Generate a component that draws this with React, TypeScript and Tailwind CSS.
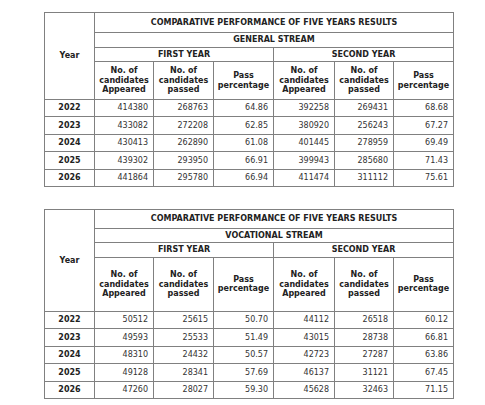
import React from "react";

type Row = [string, string, string, string, string, string, string];

const general: Row[] = [
  ["2022", "414380", "268763", "64.86", "392258", "269431", "68.68"],
  ["2023", "433082", "272208", "62.85", "380920", "256243", "67.27"],
  ["2024", "430413", "262890", "61.08", "401445", "278959", "69.49"],
  ["2025", "439302", "293950", "66.91", "399943", "285680", "71.43"],
  ["2026", "441864", "295780", "66.94", "411474", "311112", "75.61"],
];

const vocational: Row[] = [
  ["2022", "50512", "25615", "50.70", "44112", "26518", "60.12"],
  ["2023", "49593", "25533", "51.49", "43015", "28738", "66.81"],
  ["2024", "48310", "24432", "50.57", "42723", "27287", "63.86"],
  ["2025", "49128", "28341", "57.69", "46137", "31121", "67.45"],
  ["2026", "47260", "28027", "59.30", "45628", "32463", "71.15"],
];

const cell = "border border-[#808080] p-0";

function Header({ label }: { label: string[] }) {
  return (
    <>
      {label.map((l, i) => (
        <React.Fragment key={i}>
          {l}
          {i < label.length - 1 && <br />}
        </React.Fragment>
      ))}
    </>
  );
}

function ResultTable({
  stream,
  rows,
  headH,
  titleH,
  streamH,
  yearH,
}: {
  stream: string;
  rows: Row[];
  headH: string;
  titleH: string;
  streamH: string;
  yearH: string;
}) {
  const subHeads = [
    ["No. of", "candidates", "Appeared"],
    ["No. of", "candidates", "passed"],
    ["Pass", "percentage"],
  ];
  return (
    <table className="w-[409px] table-fixed border-collapse text-[8px] leading-[9.5px] text-[#222]">
      <colgroup>
        <col className="w-[50px]" />
        <col className="w-[59px]" />
        <col className="w-[60px]" />
        <col className="w-[60px]" />
        <col className="w-[61px]" />
        <col className="w-[59px]" />
        <col className="w-[60px]" />
      </colgroup>
      <tbody>
        <tr className={titleH}>
          <td rowSpan={4} className={`${cell} text-center align-middle font-bold`}>
            Year
          </td>
          <td colSpan={6} className={`${cell} text-center font-bold`}>
            COMPARATIVE PERFORMANCE OF FIVE YEARS RESULTS
          </td>
        </tr>
        <tr className={streamH}>
          <td colSpan={6} className={`${cell} text-center font-bold`}>
            {stream}
          </td>
        </tr>
        <tr className={yearH}>
          <td colSpan={3} className={`${cell} text-center font-bold`}>
            FIRST YEAR
          </td>
          <td colSpan={3} className={`${cell} text-center font-bold`}>
            SECOND YEAR
          </td>
        </tr>
        <tr className={headH}>
          {[...subHeads, ...subHeads].map((h, i) => (
            <td key={i} className={`${cell} text-center align-middle font-bold`}>
              <Header label={h} />
            </td>
          ))}
        </tr>
        {rows.map((r) => (
          <tr key={r[0]} className="h-[17.4px]">
            <td className={`${cell} text-center font-bold`}>{r[0]}</td>
            {r.slice(1).map((v, i) => (
              <td key={i} className={`${cell} pr-[5px] text-right text-[#333]`}>
                {v}
              </td>
            ))}
          </tr>
        ))}
      </tbody>
    </table>
  );
}

export default function App() {
  return (
    <div
      className="flex h-[405px] w-[485px] flex-col bg-white pl-[44px] pt-[12px]"
      style={{ fontFamily: '"DejaVu Sans", Verdana, sans-serif' }}
    >
      <ResultTable
        stream="GENERAL STREAM"
        rows={general}
        titleH="h-[20px]"
        streamH="h-[15px]"
        yearH="h-[14px]"
        headH="h-[38px]"
      />
      <div className="h-[22px]" />
      <ResultTable
        stream="VOCATIONAL STREAM"
        rows={vocational}
        titleH="h-[19px]"
        streamH="h-[14px]"
        yearH="h-[15px]"
        headH="h-[54px]"
      />
    </div>
  );
}
